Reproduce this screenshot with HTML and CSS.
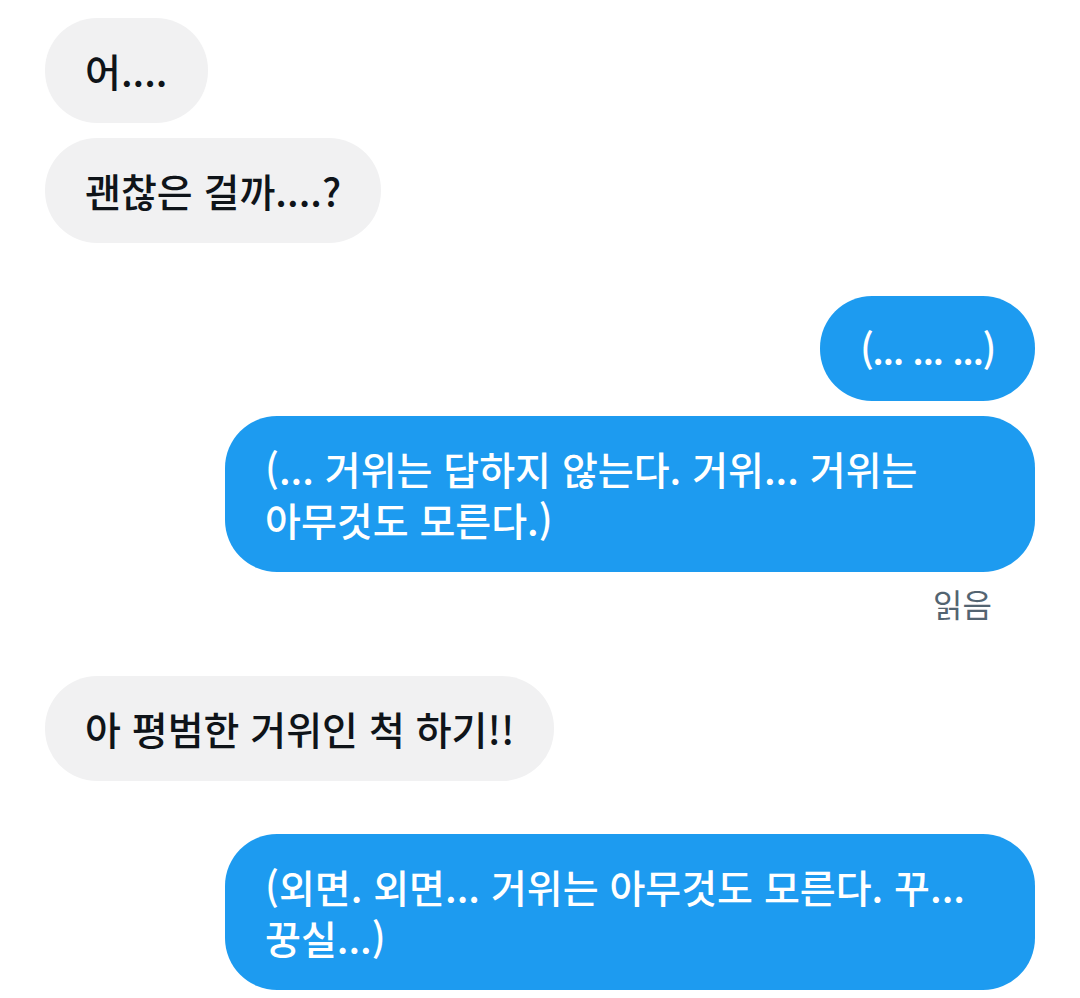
FILE: index.html
```html
<!DOCTYPE html>
<html lang="ko">

<head>
  <meta charset="UTF-8">
  <meta name="viewport" content="width=device-width, initial-scale=1.0">
  <title>메시지</title>
  <link rel="stylesheet" href="styles.css">
</head>

<body>
  <div class="chat">
    <div class="group">
      <div class="bubble received">어....</div>
      <div class="bubble received">괜찮은 걸까....?</div>
    </div>

    <div class="group">
      <div class="bubble sent tight">(... ... ...)</div>
      <div class="bubble sent">(... 거위는 답하지 않는다. 거위... 거위는 아무것도 모른다.)</div>
      <div class="read">읽음</div>
    </div>

    <div class="group">
      <div class="bubble received">아 평범한 거위인 척 하기!!</div>
    </div>

    <div class="group">
      <div class="bubble sent">(외면. 외면... 거위는 아무것도 모른다. 꾸... 꿍실...)</div>
    </div>
  </div>
</body>

</html>
```

FILE: styles.css
```css
body {
  margin: 0;
  background-color: #fff;
  font-family: "Noto Sans CJK KR", "Noto Sans", sans-serif;
}

.chat {
  display: flex;
  flex-direction: column;
  gap: 53px;
  padding: 18px 45px;
}

.group {
  display: flex;
  flex-direction: column;
  gap: 15px;
}

.bubble {
  max-width: 730px;
  padding: 27px 40px;
  border-radius: 52px;
  font-size: 39px;
  line-height: 51px;
  font-weight: 500;
  word-break: keep-all;
}

.bubble.tight {
  letter-spacing: -1.5px;
}

.received {
  align-self: flex-start;
  background-color: #f1f1f2;
  color: #0f1419;
}

.sent {
  align-self: flex-end;
  background-color: #1d9bf0;
  color: #fff;
}

.read {
  align-self: flex-end;
  margin-top: -4px;
  margin-right: 43px;
  font-size: 32px;
  line-height: 40px;
  color: #536471;
}
```
